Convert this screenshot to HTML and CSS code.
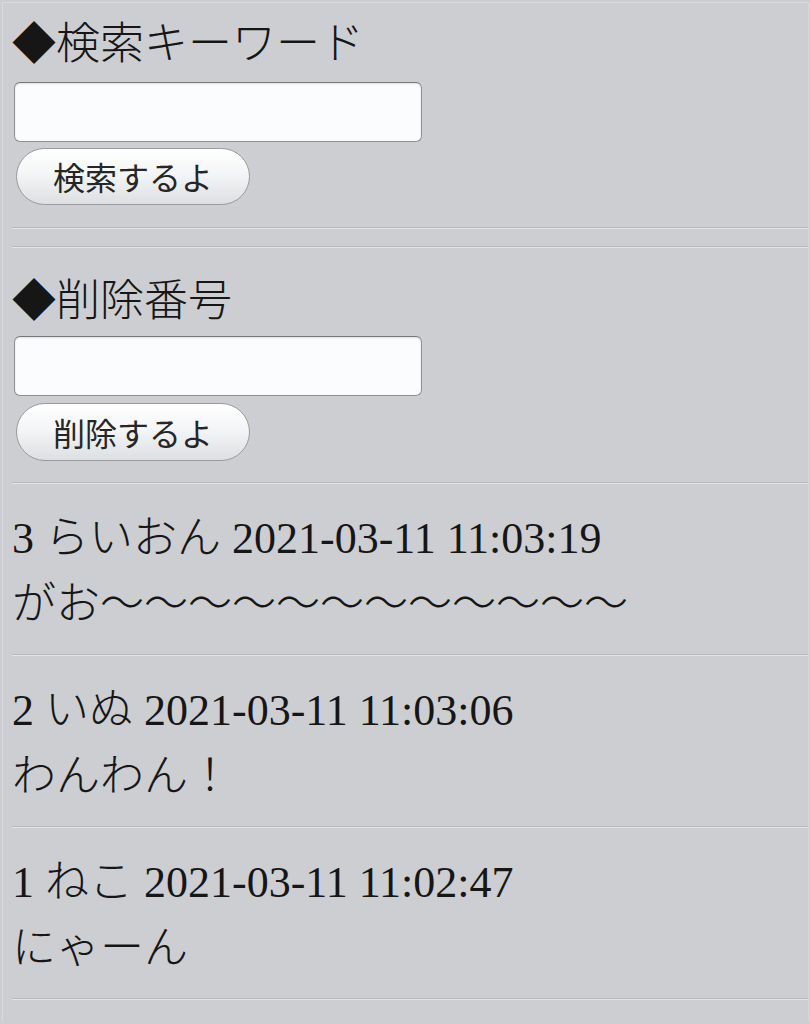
FILE: index.html
```html
<!DOCTYPE html>
<html lang="ja">
<head>
<meta charset="utf-8">
<title>掲示板</title>
<link rel="stylesheet" href="styles.css">
</head>
<body>
<div class="page">
  <form class="panel">
    <div class="label first">◆検索キーワード</div>
    <input class="field first-field" type="text">
    <button class="btn first-btn" type="button">検索するよ</button>
  </form>
  <hr class="rule r1">
  <hr class="rule r2">
  <form class="panel">
    <div class="label second">◆削除番号</div>
    <input class="field second-field" type="text">
    <button class="btn second-btn" type="button">削除するよ</button>
  </form>
  <hr class="rule r3">
  <div class="post">
    <div class="line">3 らいおん 2021-03-11 11:03:19</div>
    <div class="line">がお〜〜〜〜〜〜〜〜〜〜〜〜</div>
  </div>
  <hr class="rule">
  <div class="post">
    <div class="line">2 いぬ 2021-03-11 11:03:06</div>
    <div class="line">わんわん！</div>
  </div>
  <hr class="rule">
  <div class="post">
    <div class="line">1 ねこ 2021-03-11 11:02:47</div>
    <div class="line">にゃーん</div>
  </div>
  <hr class="rule">
</div>
</body>
</html>
```

FILE: styles.css
```css
html, body {
  margin: 0;
  padding: 0;
  background: #cdced2;
}

body {
  color: #161616;
  font-family: "Liberation Serif", "Noto Sans CJK JP", serif;
}

.page {
  margin: 2px 1px 0 2px;
  border: 1px solid #d9dadd;
  border-bottom: none;
  padding: 0 0 0 9px;
  min-height: 1019px;
  box-sizing: border-box;
}

.panel {
  margin: 0;
  display: flex;
  flex-direction: column;
  align-items: flex-start;
}

.label {
  font-family: "Liberation Serif", "Noto Sans CJK JP", serif;
  font-size: 44px;
  font-weight: 300;
  line-height: 56px;
  height: 56px;
  white-space: nowrap;
}

.label.first { margin-top: 14px; }
.label.second { margin-top: 26px; }

.field {
  display: block;
  box-sizing: border-box;
  width: 408px;
  height: 60px;
  margin: 9px 0 0 2px;
  padding: 0 10px;
  border: 1px solid #8f9094;
  border-top-color: #76777b;
  border-radius: 6px;
  background: #fbfcfd;
  box-shadow: inset 0 1px 2px rgba(0, 0, 0, 0.12);
  font-size: 32px;
  outline: none;
}

.second-field { margin-top: 6px; }

.btn {
  display: block;
  box-sizing: border-box;
  width: 234px;
  height: 57px;
  margin: 6px 0 0 4px;
  padding: 0;
  border: 1px solid #9a9b9f;
  border-radius: 29px;
  background: linear-gradient(to bottom, #ffffff 0%, #f4f5f6 45%, #dedfe2 100%);
  color: #262626;
  font-family: "Noto Sans CJK JP", sans-serif;
  font-size: 32px;
  line-height: 55px;
  text-align: center;
  cursor: pointer;
}

.second-btn {
  margin-top: 7px;
  height: 58px;
}

.rule {
  display: block;
  height: 0;
  margin: 16px 0 0 0;
  border: none;
  border-top: 1px solid #b8b9bd;
  border-bottom: 1px solid #e4e5e8;
}

.rule.r1 { margin-top: 22px; }
.rule.r2 { margin-top: 17px; }
.rule.r3 { margin-top: 21px; }

.post {
  margin: 22px 0 0 0;
}

.line {
  font-family: "Liberation Serif", "Noto Sans CJK JP", serif;
  font-size: 44px;
  font-weight: 300;
  line-height: 66px;
  white-space: nowrap;
}
```
